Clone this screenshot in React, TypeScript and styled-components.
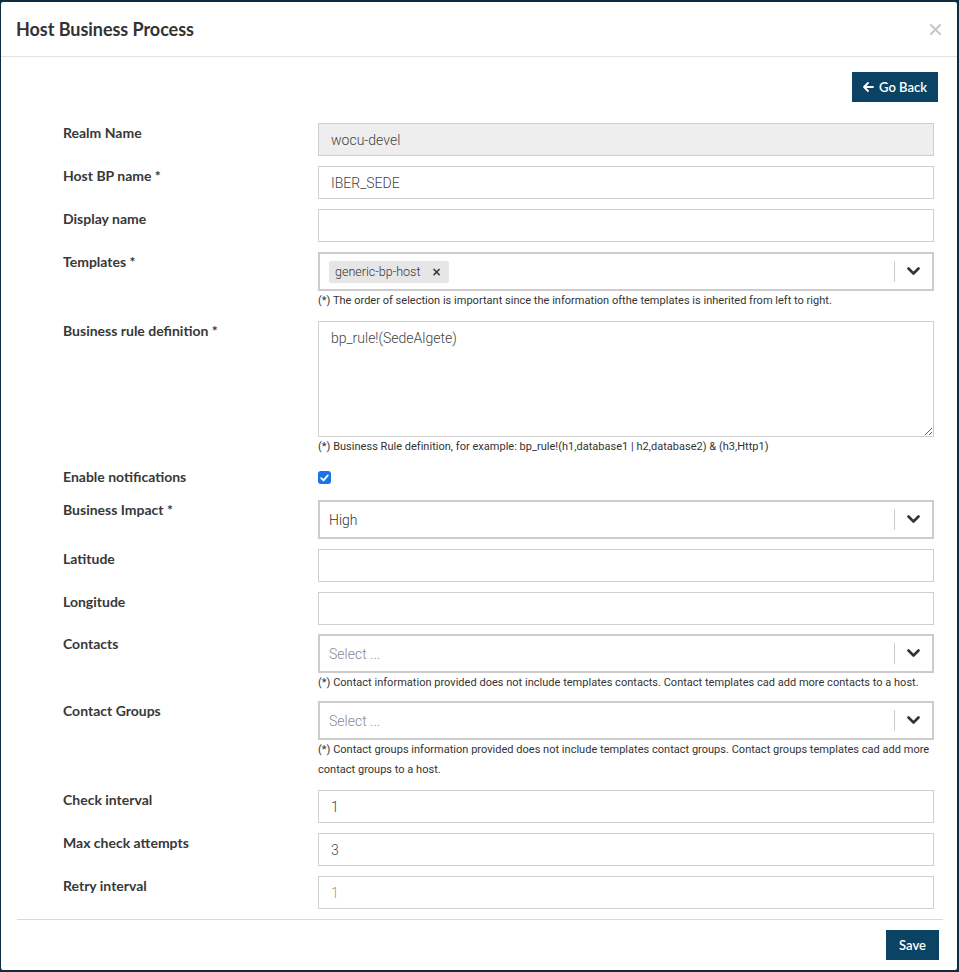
import React from "react";
import styled, { createGlobalStyle } from "styled-components";

const GlobalStyle = createGlobalStyle`
  html, body { margin: 0; padding: 0; }
  body {
    background: #0f2c40;
    font-family: Lato, "Open Sans", sans-serif;
    color: #333;
  }
  * { box-sizing: border-box; }
`;

const Modal = styled.div`
  margin: 2px 2px 2px 1px;
  min-height: 968px;
  background: #fff;
  border-radius: 2px;
  display: flex;
  flex-direction: column;
`;

const Header = styled.div`
  height: 55px;
  padding: 0 15px 0 15px;
  display: flex;
  align-items: center;
  justify-content: space-between;
  border-bottom: 1px solid #e3e3e3;
`;

const Title = styled.h4`
  margin: 0;
  font-family: Lato, sans-serif;
  font-size: 18px;
  font-weight: 700;
  color: #333;
  letter-spacing: -0.05px;
`;

const CloseButton = styled.button`
  border: 0;
  background: transparent;
  padding: 0;
  width: 14px;
  height: 14px;
  display: flex;
  align-items: center;
  justify-content: center;
  cursor: pointer;
`;

const Body = styled.div`
  flex: 1;
  padding: 15px 19px 0 62px;
  display: flex;
  flex-direction: column;
`;

const Toolbar = styled.div`
  display: flex;
  justify-content: flex-end;
  margin-bottom: 21px;
`;

const PrimaryButton = styled.button`
  height: 30px;
  padding: 0 11px;
  border: 0;
  border-radius: 0;
  background: #0a4364;
  color: #fff;
  font-family: Lato, sans-serif;
  font-size: 13px;
  font-weight: 600;
  display: inline-flex;
  align-items: center;
  gap: 5px;
  cursor: pointer;
`;

const Form = styled.div`
  display: flex;
  flex-direction: column;
  margin-right: 4px;
`;

const Row = styled.div<{ $gap?: number }>`
  display: grid;
  grid-template-columns: 255px 1fr;
  margin-bottom: ${(p) => (p.$gap ?? 10)}px;
`;

const Label = styled.label`
  font-family: Lato, sans-serif;
  font-size: 14px;
  font-weight: 700;
  line-height: 20px;
  color: #383838;
`;

const Field = styled.div`
  display: flex;
  flex-direction: column;
  min-width: 0;
`;

const TextInput = styled.input<{ $disabled?: boolean }>`
  height: 33px;
  width: 100%;
  border: 1px solid #cfcfcf;
  background: ${(p) => (p.$disabled ? "#eeeeee" : "#fff")};
  padding: 0 12px;
  font-family: Roboto, sans-serif;
  font-size: 14px;
  font-weight: 300;
  color: #444;
  outline: none;
  &::placeholder { color: #999; }
`;

const TextArea = styled.textarea`
  height: 116px;
  width: 100%;
  border: 1px solid #cfcfcf;
  padding: 8px 12px;
  font-family: Roboto, sans-serif;
  font-size: 14px;
  font-weight: 300;
  color: #444;
  resize: vertical;
  outline: none;
  display: block;
`;

const SelectBox = styled.div`
  height: 39px;
  border: 2px solid #cccccc;
  display: flex;
  align-items: center;
  background: #fff;
`;

const SelectValue = styled.div<{ $placeholder?: boolean }>`
  flex: 1;
  padding: 0 9px;
  display: flex;
  align-items: center;
  font-family: Roboto, sans-serif;
  font-size: 14px;
  font-weight: 300;
  color: ${(p) => (p.$placeholder ? "#8a8a8a" : "#333")};
`;

const Separator = styled.span`
  width: 1px;
  align-self: stretch;
  margin: 7px 0;
  background: #cccccc;
`;

const Indicator = styled.div`
  width: 37px;
  display: flex;
  align-items: center;
  justify-content: center;
`;

const Chip = styled.span`
  display: inline-flex;
  align-items: center;
  height: 22px;
  padding: 0 7px 0 6px;
  gap: 11px;
  background: #e6e6e6;
  border-radius: 2px;
  font-family: Roboto, sans-serif;
  font-size: 12.5px;
  font-weight: 300;
  color: #333;
`;

const ChipRemove = styled.span`
  font-family: "DejaVu Sans", sans-serif;
  font-size: 12px;
  font-weight: 700;
  color: #333;
`;

const Help = styled.div`
  font-family: Roboto, sans-serif;
  font-size: 11px;
  font-weight: 400;
  letter-spacing: 0.02px;
  line-height: 20px;
  color: #333;
`;

const CheckRow = styled.div`
  height: 23px;
  display: flex;
  align-items: flex-start;
  padding-top: 4px;
`;

const CheckBox = styled.span`
  width: 13px;
  height: 13px;
  border-radius: 3px;
  background: #1a73e8;
  display: flex;
  align-items: center;
  justify-content: center;
`;

const Footer = styled.div`
  margin: 0 14px 0 16px;
  border-top: 1px solid #d9d9d9;
  padding: 10px 4px 10px 0;
  display: flex;
  justify-content: flex-end;
`;

const SaveButton = styled(PrimaryButton)`
  padding: 0 13px;
`;

const Chevron = () => (
  <svg width="13" height="9" viewBox="0 0 13 9">
    <polyline points="1.5,1.5 6.5,6.5 11.5,1.5" fill="none" stroke="#333" strokeWidth="2.6" strokeLinecap="round" strokeLinejoin="round" />
  </svg>
);

const Select = ({ children, placeholder }: { children?: React.ReactNode; placeholder?: boolean }) => (
  <SelectBox>
    <SelectValue $placeholder={placeholder}>{children}</SelectValue>
    <Separator />
    <Indicator>
      <Chevron />
    </Indicator>
  </SelectBox>
);

export default function App() {
  return (
    <>
      <GlobalStyle />
      <Modal>
        <Header>
          <Title>Host Business Process</Title>
          <CloseButton aria-label="close">
            <svg width="11" height="11" viewBox="0 0 11 11">
              <path d="M1 1 L10 10 M10 1 L1 10" stroke="#c6c6c6" strokeWidth="2" strokeLinecap="round" />
            </svg>
          </CloseButton>
        </Header>
        <Body>
          <Toolbar>
            <PrimaryButton>
              <svg width="11" height="10" viewBox="0 0 11 10">
                <path d="M5 1 L1 5 L5 9 M1 5 H10" fill="none" stroke="#fff" strokeWidth="1.8" strokeLinecap="round" strokeLinejoin="round" />
              </svg>
              Go Back
            </PrimaryButton>
          </Toolbar>
          <Form>
            <Row>
              <Label>Realm Name</Label>
              <Field>
                <TextInput $disabled readOnly value="wocu-devel" />
              </Field>
            </Row>
            <Row>
              <Label>Host BP name *</Label>
              <Field>
                <TextInput readOnly value="IBER_SEDE" />
              </Field>
            </Row>
            <Row>
              <Label>Display name</Label>
              <Field>
                <TextInput readOnly value="" />
              </Field>
            </Row>
            <Row>
              <Label>Templates *</Label>
              <Field>
                <Select>
                  <Chip>
                    generic-bp-host <ChipRemove>×</ChipRemove>
                  </Chip>
                </Select>
                <Help>(*) The order of selection is important since the information ofthe templates is inherited from left to right.</Help>
              </Field>
            </Row>
            <Row>
              <Label>Business rule definition *</Label>
              <Field>
                <TextArea readOnly value="bp_rule!(SedeAlgete)" />
                <Help>(*) Business Rule definition, for example: bp_rule!(h1,database1 | h2,database2) &amp; (h3,Http1)</Help>
              </Field>
            </Row>
            <Row>
              <Label>Enable notifications</Label>
              <Field>
                <CheckRow>
                  <CheckBox>
                    <svg width="9" height="8" viewBox="0 0 9 8">
                      <path d="M1.2 4.2 L3.5 6.4 L7.8 1.4" fill="none" stroke="#fff" strokeWidth="1.8" strokeLinecap="round" strokeLinejoin="round" />
                    </svg>
                  </CheckBox>
                </CheckRow>
              </Field>
            </Row>
            <Row>
              <Label>Business Impact *</Label>
              <Field>
                <Select>High</Select>
              </Field>
            </Row>
            <Row>
              <Label>Latitude</Label>
              <Field>
                <TextInput readOnly value="" />
              </Field>
            </Row>
            <Row $gap={9}>
              <Label>Longitude</Label>
              <Field>
                <TextInput readOnly value="" />
              </Field>
            </Row>
            <Row $gap={8}>
              <Label>Contacts</Label>
              <Field>
                <Select placeholder>Select ...</Select>
                <Help>(*) Contact information provided does not include templates contacts. Contact templates cad add more contacts to a host.</Help>
              </Field>
            </Row>
            <Row>
              <Label>Contact Groups</Label>
              <Field>
                <Select placeholder>Select ...</Select>
                <Help>(*) Contact groups information provided does not include templates contact groups. Contact groups templates cad add more contact groups to a host.</Help>
              </Field>
            </Row>
            <Row>
              <Label>Check interval</Label>
              <Field>
                <TextInput readOnly value="1" />
              </Field>
            </Row>
            <Row>
              <Label>Max check attempts</Label>
              <Field>
                <TextInput readOnly value="3" />
              </Field>
            </Row>
            <Row>
              <Label>Retry interval</Label>
              <Field>
                <TextInput readOnly placeholder="1" />
              </Field>
            </Row>
          </Form>
        </Body>
        <Footer>
          <SaveButton>Save</SaveButton>
        </Footer>
      </Modal>
    </>
  );
}
